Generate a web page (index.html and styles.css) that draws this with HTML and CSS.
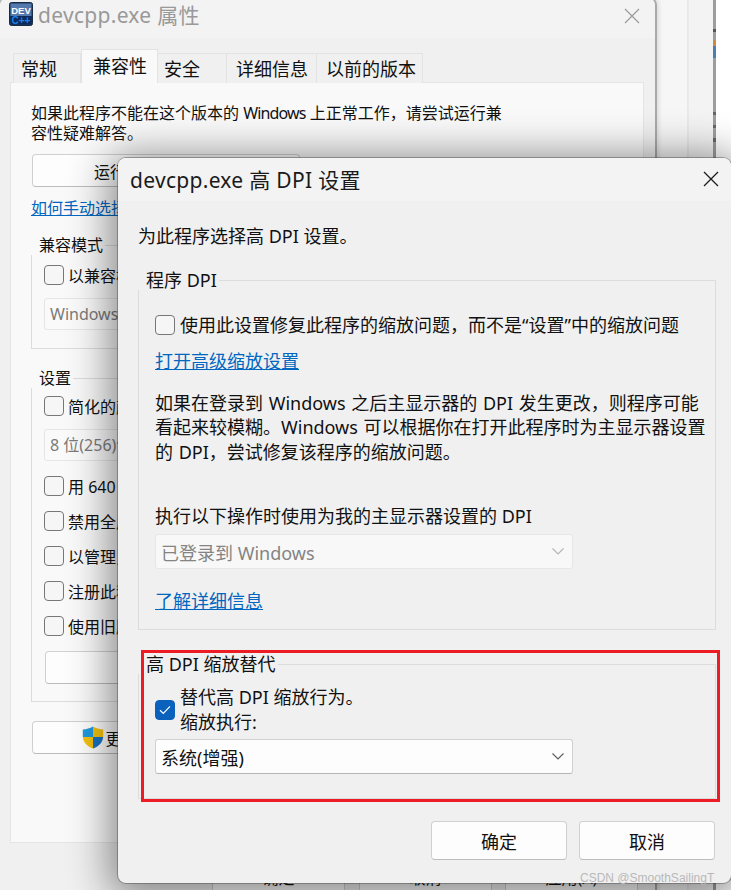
FILE: index.html
```html
<!DOCTYPE html>
<html lang="zh-CN">
<head>
<meta charset="utf-8">
<title>devcpp.exe 高 DPI 设置</title>
<link rel="stylesheet" href="styles.css">
</head>
<body>
<div class="desktop">
  <div class="far-window"><div class="far-edge"></div></div>

  <section class="win back">
    <header class="back-title">
      <svg class="app-icon" width="24" height="24" viewBox="0 0 24 24">
        <rect x="0.5" y="0.5" width="23" height="23" rx="2" fill="#16365f" stroke="#1a2b44"/>
        <rect x="1.5" y="1.5" width="21" height="12.5" fill="#5578ad"/>
        <rect x="1.5" y="14" width="21" height="8.5" fill="#0b2a5c"/>
        <text x="12" y="11.5" text-anchor="middle" class="icon-dev">DEV</text>
        <text x="12" y="21.5" text-anchor="middle" class="icon-cpp">C++</text>
      </svg>
      <span class="back-caption">devcpp.exe 属性</span>
      <svg class="back-close" width="16" height="16" viewBox="0 0 16 16"><path d="M1 1 L15 15 M15 1 L1 15" stroke="#9a9a9a" stroke-width="1.2" fill="none"/></svg>
    </header>

    <nav class="tabs">
      <span class="tab t1">常规</span>
      <span class="tab active">兼容性</span>
      <span class="tab t3">安全</span>
      <span class="tab t4">详细信息</span>
      <span class="tab t5">以前的版本</span>
    </nav>

    <div class="panel">
      <p class="intro">如果此程序不能在这个版本的 <span class="tight">Windows</span> 上正常工作，请尝试运行兼<br>容性疑难解答。</p>
      <div class="btn wide">运行兼容性疑难解答</div>
      <a class="back-link">如何手动选择兼容性设置?</a>

      <fieldset class="back-group compat">
        <legend>兼容模式</legend>
        <div class="back-row"><span class="check"></span><span>以兼容模式运行这个程序:</span></div>
        <div class="back-select">Windows 8</div>
      </fieldset>

      <fieldset class="back-group settings">
        <legend>设置</legend>
        <div class="back-row first"><span class="check"></span><span>简化的颜色模式</span></div>
        <div class="back-select">8 位(256)色</div>
        <div class="back-row r640"><span class="check"></span><span>用 640 x 480 屏幕分辨率运行</span></div>
        <div class="back-row"><span class="check"></span><span>禁用全屏优化</span></div>
        <div class="back-row"><span class="check"></span><span>以管理员身份运行此程序</span></div>
        <div class="back-row"><span class="check"></span><span>注册此程序以重新启动</span></div>
        <div class="back-row"><span class="check"></span><span>使用旧版显示器 ICC 颜色管理</span></div>
        <div class="btn inner">更改高 DPI 设置</div>
      </fieldset>

      <div class="btn wide all-users">
        <svg class="shield" width="22" height="23" viewBox="0 0 22 23">
          <path d="M11 0.5 C8 2.5 4.5 3.2 0.8 3.4 L0.8 11 L11 11 Z" fill="#1e9be0"/>
          <path d="M11 0.5 C14 2.5 17.5 3.2 21.2 3.4 L21.2 11 L11 11 Z" fill="#f4c20d"/>
          <path d="M0.8 11 L11 11 L11 22.5 C5.5 20.5 1.5 17 0.8 11 Z" fill="#f4c20d"/>
          <path d="M21.2 11 L11 11 L11 22.5 C16.5 20.5 20.5 17 21.2 11 Z" fill="#1873c4"/>
        </svg>
        <span>更改所有用户的设置</span>
      </div>
    </div>

    <footer class="back-actions">
      <span class="back-btn b1">确定</span>
      <span class="back-btn b2">取消</span>
      <span class="back-btn b3">应用(A)</span>
    </footer>
  </section>

  <section class="win dialog">
    <header class="dlg-title">
      <span class="dlg-caption">devcpp.exe 高 DPI 设置</span>
      <svg class="dlg-close" width="16" height="16" viewBox="0 0 16 16"><path d="M1 1 L15 15 M15 1 L1 15" stroke="#1c1c1c" stroke-width="1.3" fill="none"/></svg>
    </header>
    <div class="dlg-body">
      <p class="dlg-lead">为此程序选择高 DPI 设置。</p>

      <fieldset class="group dpi">
        <legend>程序 DPI</legend>
        <div class="row"><span class="check"></span><span>使用此设置修复此程序的缩放问题，而不是“设置”中的缩放问题</span></div>
        <a class="link adv">打开高级缩放设置</a>
        <p class="para">如果在登录到 Windows 之后主显示器的 DPI 发生更改，则程序可能<br>看起来较模糊。Windows 可以根据你在打开此程序时为主显示器设置<br>的 DPI，尝试修复该程序的缩放问题。</p>
        <p class="when">执行以下操作时使用为我的主显示器设置的 DPI</p>
        <div class="select disabled">
          <span>已登录到 Windows</span>
          <svg width="12" height="7" viewBox="0 0 12 7"><path d="M0.5 0.5 L6 6 L11.5 0.5" stroke="#b5b5b5" stroke-width="1.2" fill="none"/></svg>
        </div>
        <a class="link more">了解详细信息</a>
      </fieldset>

      <fieldset class="group override">
        <legend>高 DPI 缩放替代</legend>
        <div class="row two">
          <span class="check on">
            <svg width="12" height="10" viewBox="0 0 12 10"><path d="M1 5.2 L4.3 8.4 L11 1.4" stroke="#fff" stroke-width="1.2" fill="none"/></svg>
          </span>
          <span>替代高 DPI 缩放行为。<br>缩放执行:</span>
        </div>
        <div class="select">
          <span>系统(增强)</span>
          <svg width="12" height="7" viewBox="0 0 12 7"><path d="M0.5 0.5 L6 6 L11.5 0.5" stroke="#606060" stroke-width="1.2" fill="none"/></svg>
        </div>
      </fieldset>

      <div class="dlg-actions">
        <span class="btn dlg-btn">确定</span>
        <span class="btn dlg-btn">取消</span>
      </div>
    </div>
  </section>

  <div class="annotation"></div>
  <div class="watermark">CSDN @SmoothSailingT</div>
</div>
</body>
</html>
```

FILE: styles.css
```css
* { box-sizing: border-box; }
html, body { margin: 0; padding: 0; background: #fff; }
body { font-family: "Noto Sans", "Noto Sans CJK SC", sans-serif; color: #111; }
p { margin: 0; }
a { text-decoration: underline; }

.desktop { position: relative; width: 731px; height: 890px; overflow: hidden; background: #fff; }

/* window behind everything */
.far-window {
  position: absolute; left: 640px; top: 0; width: 76px; height: 890px;
  background: linear-gradient(90deg, #f6f6f6 0 47px, #e9e9e9 47px 49px, #f3f3f3 49px 73px, #9d9d9d 73px);
}
.far-edge {
  position: absolute; right: 0; top: 0; width: 3px; height: 160px;
  background: linear-gradient(180deg, #9d9d9d 0 29px, #555 29px 32px, #9d9d9d 32px 40px, #c98a4a 40px 46px, #4a7fb5 46px 58px, #9d9d9d 58px 112px, #666 112px 115px, #9d9d9d 115px 125px, #666 125px 128px, #9d9d9d 128px 138px, #666 138px 142px, #9d9d9d 142px);
}

.win { position: absolute; display: flex; flex-direction: column; }

/* properties window */
.back {
  left: -1px; top: -3px; width: 658px; height: 900px;
  background: #f0f0f0; border: 1px solid #a9a9a9; border-right-width: 2px; border-radius: 8px;
  box-shadow: 0 0 6px rgba(0,0,0,.18);
}
.back-title {
  display: flex; align-items: center; height: 40px; flex: none;
  padding: 0 15px 0 9px; background: #f3f3f3; border-radius: 8px 8px 0 0;
}
.app-icon { flex: none; margin-top: -8px; }
.icon-dev { font: 700 9.5px "Liberation Sans", sans-serif; fill: #fff; }
.icon-cpp { font: 700 10px "Liberation Sans", sans-serif; fill: #1f7fe0; }
.back-caption { margin-left: 5px; font-size: 21px; letter-spacing: .3px; line-height: 28px; color: #999; margin-top: -7px; flex: 1; }
.back-close { flex: none; margin-top: -4px; }

.tabs { display: flex; align-items: flex-end; height: 45px; flex: none; padding-left: 13px; margin-bottom: -1px; position: relative; z-index: 1; }
.tab {
  height: 30px; font-size: 18px; line-height: 30px; white-space: nowrap;
  background: #f0f0f0; border: 1px solid #e3e3e3; border-bottom: 0; border-left-width: 0;
}
.t1 { width: 68px; padding-left: 7px; border-left-width: 1px; }
.active { width: 77px; height: 34px; padding-left: 11px; line-height: 33px; background: #f9f9f9; border-left-width: 1px; }
.t3 { width: 69px; padding-left: 6px; }
.t4 { width: 90px; padding-left: 9px; }
.t5 { width: 106px; padding-left: 9px; }

.panel {
  flex: none; width: 634px; height: 761px; margin-left: 10px; padding: 20px 20px 0;
  background: #f9f9f9; border: 1px solid #e5e5e5;
}
.intro { font-size: 16px; line-height: 20px; white-space: nowrap; }
.tight { letter-spacing: -.85px; }
.btn {
  display: flex; align-items: center; justify-content: center; gap: 1px;
  background: #fdfdfd; border: 1px solid #d0d0d0; border-bottom-color: #bcbcbc; border-radius: 4px;
  font-size: 16px; white-space: nowrap;
}
.wide { width: 268px; height: 33px; margin-top: 11px; margin-left: 1px; }
.back-link { display: block; margin-top: 11px; font-size: 16px; line-height: 20px; color: #0067c0; }

.back-group { margin: 0; padding: 0 12px; border: 1px solid #dcdcdc; min-width: 0; width: 590px; }
.back-group legend { padding: 0 2px 0 8px; font-size: 16px; line-height: 20px; margin-left: -13px; }
.compat { margin-top: 17px; height: 114px; padding-top: 10px; }
.settings { margin-top: 19px; height: 334px; padding-top: 8px; }
.back-row { display: flex; align-items: center; gap: 4px; height: 20px; font-size: 16px; white-space: nowrap; margin-bottom: 15px; }
.back-row.first { margin-bottom: 0; }
.back-row.r640 { margin-top: 15px; }
.back-select {
  margin-top: 13px; height: 32px; width: 290px; padding-left: 5px;
  font-size: 16px; line-height: 30px; color: #7a7a7a;
  background: #fafafa; border: 1px solid #e6e6e6; border-radius: 3px;
}
.compat .back-row { margin-bottom: 0; }
.inner { width: 268px; height: 33px; margin-left: 1px; margin-top: 0; }
.all-users { margin-top: 19px; gap: 1px; }
.shield { flex: none; }
.back-actions { position: relative; flex: none; height: 30px; margin-top: 18px; }
.back-btn {
  position: absolute; top: 0; height: 32px; display: flex; align-items: center; justify-content: center;
  font-size: 16px; background: #fdfdfd; border: 1px solid #d0d0d0; border-radius: 4px;
}
.b1 { left: 212px; width: 133px; }
.b2 { left: 359px; width: 133px; }
.b3 { left: 505px; width: 133px; }

.check {
  flex: none; display: flex; align-items: center; justify-content: center;
  width: 20px; height: 20px; background: #f6f6f6; border: 1px solid #777; border-radius: 4px;
}
.check.on { background: #0b62bd; border-color: #0b62bd; }

/* DPI dialog */
.dialog {
  left: 118px; top: 158px; width: 613px; height: 725px;
  background: #f0f0f0; border-radius: 8px;
  box-shadow: 0 0 0 1px rgba(60,60,60,.4), 0 6px 42px 8px rgba(0,0,0,.46);
}
.dlg-title {
  display: flex; align-items: center; height: 43px; flex: none; padding-left: 12px;
  background: #f3f3f3; border-radius: 8px 8px 0 0;
}
.dlg-caption { font-size: 21px; letter-spacing: .3px; line-height: 28px; flex: 1; color: #1a1a1a; }
.dlg-close { flex: none; margin-right: 12px; margin-top: -1px; }
.dlg-body { padding: 23px 0 0 20px; font-size: 18px; }
.dlg-lead { line-height: 24px; white-space: nowrap; }

.group { margin: 0; padding: 0 16px; border: 1px solid #dcdcdc; width: 578px; min-width: 0; }
.group legend { padding: 0 2px 0 8px; margin-left: -17px; line-height: 20px; font-size: 18px; white-space: nowrap; }
.dpi { margin-top: 22px; height: 360px; padding-top: 23px; }
.override { margin-top: 24px; height: 145px; padding-top: 11px; }
.row { display: flex; align-items: center; gap: 5px; white-space: nowrap; line-height: 24px; }
.row.two { line-height: 24.5px; }
.link { display: block; width: max-content; color: #0067c0; line-height: 24px; }
.adv { margin-top: 12px; }
.para { margin-top: 18px; line-height: 24.4px; white-space: nowrap; word-spacing: 1px; }
.when { margin-top: 40px; line-height: 24px; white-space: nowrap; }
.select {
  display: flex; align-items: center; justify-content: space-between;
  width: 418px; height: 35px; margin-top: 7px; padding: 0 8px 0 5px;
  background: #fdfdfd; border: 1px solid #d0d0d0; border-bottom-color: #b5b5b5; border-radius: 3px;
}
.select.disabled { background: #f8f8f8; border-color: #e6e6e6; color: #848484; margin-top: 6px; }
.more { margin-top: 20px; }
.override .select { margin-top: 5px; }

.dlg-actions { display: flex; gap: 12px; margin-top: 22px; margin-left: 293px; }
.dlg-btn { width: 136px; height: 39px; font-size: 18px; }

/* overlays */
.annotation { position: absolute; left: 141px; top: 650px; width: 579px; height: 152px; border: 3px solid #ed1c24; }
.watermark { position: absolute; left: 580px; top: 870px; font: 12px/16px "Liberation Sans", sans-serif; color: #b9b9b9; white-space: nowrap; }
```
